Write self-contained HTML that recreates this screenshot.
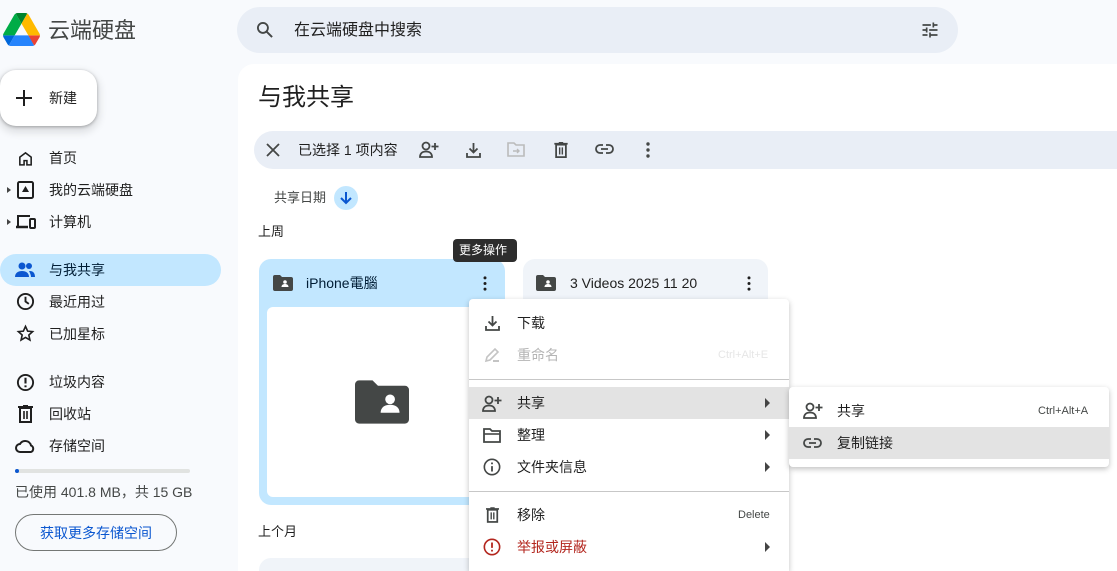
<!DOCTYPE html>
<html style="width:1117px;height:571px;overflow:hidden"><head><meta charset="utf-8"><style>
*{box-sizing:border-box;margin:0;padding:0}
body{width:1117px;height:571px;overflow:hidden;background:#f8fafd;font-family:"Liberation Sans","Noto Sans CJK SC",sans-serif;color:#1f1f1f;position:relative}
.a{position:absolute}
.t{position:absolute;font-size:14px;line-height:20px;white-space:nowrap}
svg{position:absolute}
.nav .t{left:49px}
</style></head><body>
<svg style="left:3px;top:13px" width="37" height="33" viewBox="0 0 87.3 78"><path d="m6.6 66.85 3.85 6.65c.8 1.4 1.950 2.5 3.3 3.3l13.75-23.8h-27.5c0 1.55.4 3.1 1.2 4.5z" fill="#0066da"/><path d="m43.65 25-13.75-23.8c-1.35.8-2.5 1.9-3.3 3.3l-25.4 44a9.06 9.06 0 0 0 -1.2 4.5h27.5z" fill="#00ac47"/><path d="m73.55 76.8c1.35-.8 2.5-1.9 3.3-3.3l1.6-2.75 7.65-13.25c.8-1.4 1.2-2.95 1.2-4.5h-27.502l5.852 11.5z" fill="#ea4335"/><path d="m43.65 25 13.75-23.8c-1.35-.8-2.9-1.2-4.5-1.2h-18.5c-1.6 0-3.150.45-4.5 1.2z" fill="#00832d"/><path d="m59.8 53h-32.3l-13.75 23.8c1.35.8 2.9 1.2 4.5 1.2h50.8c1.6 0 3.15-.45 4.5-1.2z" fill="#2684fc"/><path d="m73.4 26.5-12.7-22c-.8-1.4-1.95-2.5-3.3-3.3l-13.75 23.8 16.15 28h27.45c0-1.55-.4-3.1-1.2-4.5z" fill="#ffba00"/></svg>
<div class="t" style="left:48px;top:16px;font-size:22px;line-height:30px;color:#444746">云端硬盘</div>
<div class="a" style="left:237px;top:7px;width:721px;height:46px;background:#e9eef6;border-radius:23px"></div>
<svg style="left:255px;top:20px" width="20" height="20" viewBox="0 0 24 24"><circle cx="9.5" cy="9.5" r="6" fill="none" stroke="#444746" stroke-width="2.2"/><path d="M14 14l6.5 6.5" stroke="#444746" stroke-width="2.4"/></svg>
<div class="t" style="left:294px;top:20px;font-size:16px;line-height:22px;color:#1f1f1f">在云端硬盘中搜索</div>
<svg style="left:920px;top:20px" width="20" height="20" viewBox="0 0 24 24" fill="#444746"><path d="M3 17v2h6v-2H3zM3 5v2h10V5H3zm10 16v-2h8v-2h-8v-2h-2v6h2zM7 9v2H3v2h4v2h2V9H7zm14 4v-2H11v2h10zm-6-4h2V7h4V5h-4V3h-2v6z"/></svg>
<div class="a" style="left:0;top:70px;width:97px;height:56px;background:#fff;border-radius:16px;box-shadow:0 1px 3px rgba(0,0,0,.3),0 4px 8px 3px rgba(0,0,0,.1)"></div>
<svg style="left:14px;top:88px" width="20" height="20" viewBox="0 0 20 20"><path d="M10 2v16M2 10h16" stroke="#1f1f1f" stroke-width="2"/></svg>
<div class="t" style="left:49px;top:88px">新建</div>
<div class="a" style="left:0;top:254px;width:221px;height:32px;background:#c2e7ff;border-radius:16px"></div>
<div class="nav">
<svg style="left:17px;top:150px" width="17" height="17" viewBox="0 0 24 24"><path d="M4 21V10l8-6 8 6v11h-6v-6h-4v6z" fill="none" stroke="#1f1f1f" stroke-width="2.2"/></svg>
<div class="t" style="top:148px">首页</div>
<div class="a" style="left:7px;top:187px;border-left:4px solid #444;border-top:3px solid transparent;border-bottom:3px solid transparent"></div>
<svg style="left:17px;top:181px" width="17" height="18" viewBox="0 0 17 18"><rect x="1" y="1" width="15" height="16" rx="1.5" fill="none" stroke="#1f1f1f" stroke-width="2"/><path d="M5 11l3.5-6 3.5 6z" fill="#1f1f1f"/></svg>
<div class="t" style="top:180px">我的云端硬盘</div>
<div class="a" style="left:7px;top:219px;border-left:4px solid #444;border-top:3px solid transparent;border-bottom:3px solid transparent"></div>
<svg style="left:15px;top:214px" width="21" height="16" viewBox="0 0 21 16"><path d="M3 12V2h12" fill="none" stroke="#1f1f1f" stroke-width="2"/><path d="M1 13h12" stroke="#1f1f1f" stroke-width="2.5"/><rect x="15" y="5" width="5" height="9" rx="1" fill="none" stroke="#1f1f1f" stroke-width="2"/></svg>
<div class="t" style="top:212px">计算机</div>
<svg style="left:15px;top:262px" width="20" height="16" viewBox="0 0 20 16" fill="#0b57d0"><circle cx="7" cy="4" r="3.5"/><path d="M0 15c0-4 3-6 7-6s7 2 7 6z"/><circle cx="14" cy="4" r="3"/><path d="M15 9c3 0 5 2 5 6h-4c0-2-1-4-2-6z"/></svg>
<div class="t" style="top:260px;color:#001d35">与我共享</div>
<svg style="left:16px;top:292px" width="19" height="19" viewBox="0 0 20 20"><circle cx="10" cy="10" r="8" fill="none" stroke="#1f1f1f" stroke-width="2"/><path d="M10 5v5l3.5 2.5" fill="none" stroke="#1f1f1f" stroke-width="2"/></svg>
<div class="t" style="top:292px">最近用过</div>
<svg style="left:16px;top:324px" width="19" height="19" viewBox="0 0 24 24"><path d="M12 3l2.7 6 6.3.6-4.8 4.3 1.4 6.4L12 17l-5.6 3.3 1.4-6.4L3 9.6l6.3-.6z" fill="none" stroke="#1f1f1f" stroke-width="2"/></svg>
<div class="t" style="top:324px">已加星标</div>
<svg style="left:16px;top:373px" width="19" height="19" viewBox="0 0 20 20"><circle cx="10" cy="10" r="8" fill="none" stroke="#1f1f1f" stroke-width="2"/><path d="M10 5v6M10 13v2" stroke="#1f1f1f" stroke-width="2.2"/></svg>
<div class="t" style="top:372px">垃圾内容</div>
<svg style="left:18px;top:405px" width="15" height="18" viewBox="0 0 15 18"><path d="M0 2h15M5 1h5" stroke="#1f1f1f" stroke-width="2"/><rect x="2" y="3" width="11" height="14" fill="none" stroke="#1f1f1f" stroke-width="2"/><path d="M6 6v8M9 6v8" stroke="#1f1f1f" stroke-width="1.6"/></svg>
<div class="t" style="top:404px">回收站</div>
<svg style="left:15px;top:438px" width="21" height="15" viewBox="0 0 21 15"><path d="M5 14a4 4 0 0 1 0-8 6 6 0 0 1 11 1.5A3.5 3.5 0 0 1 16 14z" fill="none" stroke="#1f1f1f" stroke-width="2"/></svg>
<div class="t" style="top:436px">存储空间</div>
</div>
<div class="a" style="left:15px;top:469px;width:175px;height:4px;background:#e1e3e1;border-radius:2px"></div>
<div class="a" style="left:15px;top:469px;width:4px;height:4px;background:#0b57d0;border-radius:2px"></div>
<div class="t" style="left:15px;top:482px;color:#444746">已使用 401.8 MB，共 15 GB</div>
<div class="a" style="left:15px;top:514px;width:162px;height:37px;border:1px solid #747775;border-radius:19px"></div>
<div class="t" style="left:40px;top:523px;color:#0b57d0">获取更多存储空间</div>
<div class="a" style="left:238px;top:64px;width:879px;height:507px;background:#fff;border-radius:16px 0 0 0"></div>
<div class="t" style="left:258px;top:82px;font-size:24px;line-height:32px">与我共享</div>
<div class="a" style="left:254px;top:131px;width:863px;height:38px;background:#e9eef6;border-radius:19px 0 0 19px"></div>
<svg style="left:266px;top:143px" width="14" height="14" viewBox="0 0 14 14"><path d="M1 1l12 12M13 1L1 13" stroke="#444746" stroke-width="1.8"/></svg>
<div class="t" style="left:298px;top:140px;color:#1f1f1f">已选择 1 项内容</div>
<svg style="left:419px;top:141px" width="20" height="18" viewBox="0 0 20 18"><circle cx="7" cy="5" r="3.5" fill="none" stroke="#444746" stroke-width="1.8"/><path d="M1 16c0-4 3-5.5 6-5.5s6 1.5 6 5.5z" fill="none" stroke="#444746" stroke-width="1.8"/><path d="M16 2v7M12.5 5.5h7" stroke="#444746" stroke-width="1.8"/></svg>
<svg style="left:466px;top:142px" width="15" height="16" viewBox="0 0 15 16"><path d="M7.5 1v9M3.5 6.5l4 4 4-4M1 11v4h13v-4" fill="none" stroke="#444746" stroke-width="1.8"/></svg>
<svg style="left:507px;top:142px" width="18" height="15" viewBox="0 0 18 15"><path d="M1 1h6l2 2h8v11H1z" fill="none" stroke="#bbb" stroke-width="1.6"/><path d="M6 9h6M10 7l2 2-2 2" stroke="#bbb" stroke-width="1.4" fill="none"/></svg>
<svg style="left:554px;top:142px" width="14" height="16" viewBox="0 0 15 18"><path d="M0 2h15M5 1h5" stroke="#444746" stroke-width="2"/><rect x="2" y="3" width="11" height="14" fill="none" stroke="#444746" stroke-width="2"/><path d="M6 6v8M9 6v8" stroke="#444746" stroke-width="1.6"/></svg>
<svg style="left:595px;top:143px" width="19" height="12" viewBox="0 0 19 12"><path d="M8 2H5a4 4 0 0 0 0 8h3M11 2h3a4 4 0 0 1 0 8h-3M6 6h7" fill="none" stroke="#444746" stroke-width="1.8"/></svg>
<svg style="left:645px;top:142px" width="6" height="16" viewBox="0 0 6 16" fill="#444746"><circle cx="3" cy="2" r="1.7"/><circle cx="3" cy="8" r="1.7"/><circle cx="3" cy="14" r="1.7"/></svg>
<div class="t" style="left:274px;top:188px;font-size:13px;color:#444746">共享日期</div>
<div class="a" style="left:334px;top:186px;width:24px;height:24px;border-radius:12px;background:#c2e7ff"></div>
<svg style="left:339px;top:191px" width="14" height="14" viewBox="0 0 14 14"><path d="M7 1v11M2 7l5 5 5-5" fill="none" stroke="#0b57d0" stroke-width="2"/></svg>
<div class="t" style="left:258px;top:222px;font-size:13px">上周</div>
<div class="a" style="left:259px;top:259px;width:246px;height:246px;background:#c2e7ff;border-radius:12px"></div>
<div class="a" style="left:267px;top:307px;width:230px;height:190px;background:#fff;border-radius:6px"></div>
<svg style="left:273px;top:275px" width="20" height="16" viewBox="0 0 20 16"><path d="M0 2a2 2 0 0 1 2-2h5l2 2h9a2 2 0 0 1 2 2v10a2 2 0 0 1-2 2H2a2 2 0 0 1-2-2z" fill="#444746"/><circle cx="12" cy="7" r="1.8" fill="#fff"/><path d="M8.5 12c0-2 1.5-3 3.5-3s3.5 1 3.5 3z" fill="#fff"/></svg>
<div class="t" style="left:306px;top:273px;color:#001d35">iPhone電腦</div>
<svg style="left:482px;top:276px" width="6" height="15" viewBox="0 0 6 16" fill="#1f1f1f"><circle cx="3" cy="2" r="1.6"/><circle cx="3" cy="8" r="1.6"/><circle cx="3" cy="14" r="1.6"/></svg>
<svg style="left:355px;top:380px" width="54" height="44" viewBox="0 0 20 16"><path d="M0 1.5a1.5 1.5 0 0 1 1.5-1.5h5l2 2h10a1.5 1.5 0 0 1 1.5 1.5v11a1.5 1.5 0 0 1-1.5 1.5h-17A1.5 1.5 0 0 1 0 14.5z" fill="#444746"/><circle cx="13" cy="7" r="1.8" fill="#fff"/><path d="M9.5 12c0-2 1.5-3 3.5-3s3.5 1 3.5 3z" fill="#fff"/></svg>
<div class="a" style="left:523px;top:259px;width:245px;height:60px;background:#f0f4f9;border-radius:12px"></div>
<svg style="left:536px;top:275px" width="20" height="16" viewBox="0 0 20 16"><path d="M0 2a2 2 0 0 1 2-2h5l2 2h9a2 2 0 0 1 2 2v10a2 2 0 0 1-2 2H2a2 2 0 0 1-2-2z" fill="#444746"/><circle cx="12" cy="7" r="1.8" fill="#fff"/><path d="M8.5 12c0-2 1.5-3 3.5-3s3.5 1 3.5 3z" fill="#fff"/></svg>
<div class="t" style="left:570px;top:273px">3 Videos 2025 11 20</div>
<svg style="left:746px;top:276px" width="6" height="15" viewBox="0 0 6 16" fill="#1f1f1f"><circle cx="3" cy="2" r="1.6"/><circle cx="3" cy="8" r="1.6"/><circle cx="3" cy="14" r="1.6"/></svg>
<div class="t" style="left:258px;top:522px;font-size:13px">上个月</div>
<div class="a" style="left:259px;top:558px;width:246px;height:13px;background:#f0f4f9;border-radius:12px 12px 0 0"></div>
<div class="a" style="left:453px;top:239px;width:64px;height:23px;background:#2d2d2d;border-radius:4px"></div>
<div class="t" style="left:459px;top:241px;font-size:12px;line-height:18px;color:#fff">更多操作</div>
<div class="a" style="left:469px;top:299px;width:320px;height:272px;background:#fff;border-radius:4px 4px 0 0;box-shadow:0 2px 6px rgba(0,0,0,.25)"></div>
<div class="a" style="left:469px;top:379px;width:320px;height:1px;background:#c7c7c7"></div>
<div class="a" style="left:469px;top:387px;width:320px;height:32px;background:#e3e3e3"></div>
<div class="a" style="left:469px;top:491px;width:320px;height:1px;background:#c7c7c7"></div>
<svg style="left:485px;top:315px" width="15" height="16" viewBox="0 0 15 16"><path d="M7.5 1v9M3.5 6.5l4 4 4-4M1 11v4h13v-4" fill="none" stroke="#444746" stroke-width="1.8"/></svg>
<div class="t" style="left:517px;top:313px">下载</div>
<svg style="left:484px;top:347px" width="16" height="16" viewBox="0 0 16 16"><path d="M2 14l1-4 8-8 3 3-8 8z" fill="none" stroke="#c4c4c4" stroke-width="1.6"/><path d="M9 14h6" stroke="#c4c4c4" stroke-width="2"/></svg>
<div class="t" style="left:517px;top:345px;color:#b5b5b5">重命名</div>
<div class="t" style="left:718px;top:347px;font-size:11px;line-height:16px;color:#e6e6e6">Ctrl+Alt+E</div>
<svg style="left:482px;top:395px" width="20" height="18" viewBox="0 0 20 18"><circle cx="7" cy="5" r="3.5" fill="none" stroke="#444746" stroke-width="1.8"/><path d="M1 16c0-4 3-5.5 6-5.5s6 1.5 6 5.5z" fill="none" stroke="#444746" stroke-width="1.8"/><path d="M16 2v7M12.5 5.5h7" stroke="#444746" stroke-width="1.8"/></svg>
<div class="t" style="left:517px;top:393px">共享</div>
<svg style="left:483px;top:428px" width="18" height="15" viewBox="0 0 18 15"><path d="M1 1h6l2 2h8v11H1z" fill="none" stroke="#444746" stroke-width="1.8"/><path d="M1 6h16" stroke="#444746" stroke-width="1.6"/></svg>
<div class="t" style="left:517px;top:425px">整理</div>
<svg style="left:483px;top:458px" width="18" height="18" viewBox="0 0 20 20"><circle cx="10" cy="10" r="8.5" fill="none" stroke="#444746" stroke-width="1.8"/><path d="M10 9v6M10 5v2" stroke="#444746" stroke-width="2"/></svg>
<div class="t" style="left:517px;top:457px">文件夹信息</div>
<svg style="left:486px;top:507px" width="13" height="16" viewBox="0 0 15 18"><path d="M0 2h15M5 1h5" stroke="#444746" stroke-width="2"/><rect x="2" y="3" width="11" height="14" fill="none" stroke="#444746" stroke-width="2"/><path d="M6 6v8M9 6v8" stroke="#444746" stroke-width="1.6"/></svg>
<div class="t" style="left:517px;top:505px">移除</div>
<div class="t" style="left:738px;top:507px;font-size:11px;line-height:16px;color:#444746">Delete</div>
<svg style="left:483px;top:538px" width="18" height="18" viewBox="0 0 20 20"><circle cx="10" cy="10" r="8.5" fill="none" stroke="#b3261e" stroke-width="1.8"/><path d="M10 5v6M10 13v2" stroke="#b3261e" stroke-width="2"/></svg>
<div class="t" style="left:517px;top:537px;color:#b3261e">举报或屏蔽</div>
<div class="a" style="left:765px;top:398px;border-left:5px solid #444;border-top:5px solid transparent;border-bottom:5px solid transparent"></div>
<div class="a" style="left:765px;top:430px;border-left:5px solid #444;border-top:5px solid transparent;border-bottom:5px solid transparent"></div>
<div class="a" style="left:765px;top:462px;border-left:5px solid #444;border-top:5px solid transparent;border-bottom:5px solid transparent"></div>
<div class="a" style="left:765px;top:542px;border-left:5px solid #444;border-top:5px solid transparent;border-bottom:5px solid transparent"></div>
<div class="a" style="left:789px;top:387px;width:320px;height:80px;background:#fff;border-radius:4px;box-shadow:0 2px 6px rgba(0,0,0,.25)"></div>
<div class="a" style="left:789px;top:427px;width:320px;height:32px;background:#e3e3e3"></div>
<svg style="left:803px;top:402px" width="20" height="18" viewBox="0 0 20 18"><circle cx="7" cy="5" r="3.5" fill="none" stroke="#444746" stroke-width="1.8"/><path d="M1 16c0-4 3-5.5 6-5.5s6 1.5 6 5.5z" fill="none" stroke="#444746" stroke-width="1.8"/><path d="M16 2v7M12.5 5.5h7" stroke="#444746" stroke-width="1.8"/></svg>
<div class="t" style="left:837px;top:401px">共享</div>
<div class="t" style="left:1038px;top:403px;font-size:11px;line-height:16px;color:#444746">Ctrl+Alt+A</div>
<svg style="left:803px;top:437px" width="19" height="12" viewBox="0 0 19 12"><path d="M8 2H5a4 4 0 0 0 0 8h3M11 2h3a4 4 0 0 1 0 8h-3M6 6h7" fill="none" stroke="#444746" stroke-width="1.8"/></svg>
<div class="t" style="left:837px;top:433px">复制链接</div>
</body></html>
